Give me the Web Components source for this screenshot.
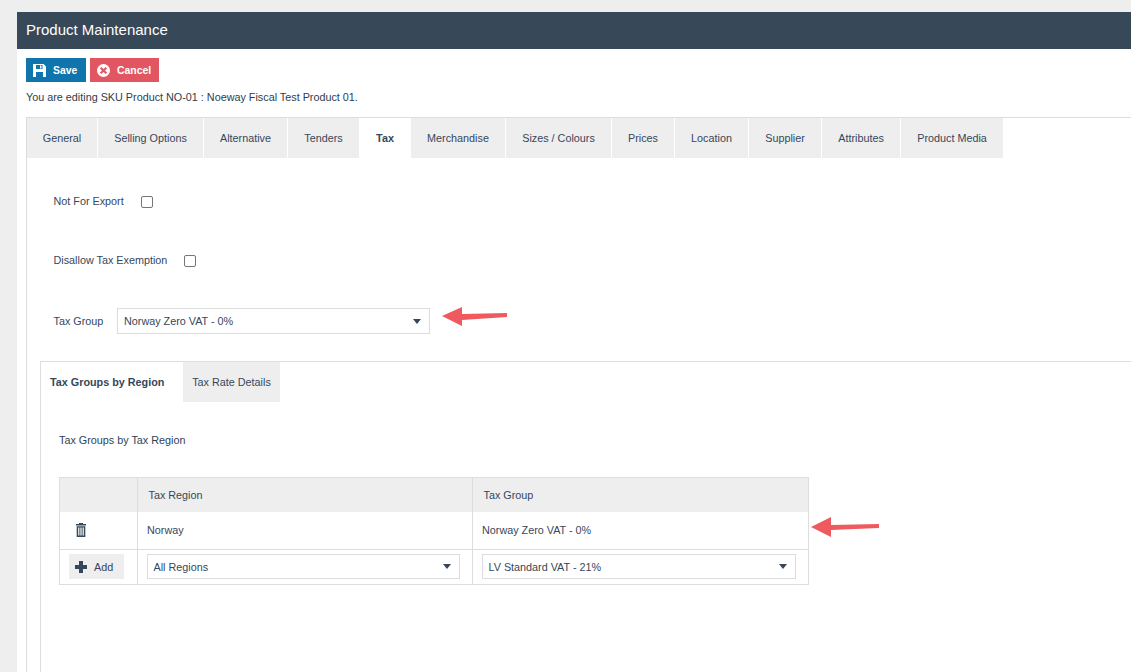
<!DOCTYPE html>
<html>
<head>
<meta charset="utf-8">
<title>Product Maintenance</title>
<style>
    html, body { margin: 0; height: 100%; overflow: hidden; }
    body { background: #eeeeee; font: 10.8px "Liberation Sans", Arial, sans-serif; color: #36475a; }
</style>
</head>
<body>
<pm-page heading="Product Maintenance">
    <div slot="actions">
        <pm-button kind="save">Save</pm-button>
        <pm-button kind="cancel">Cancel</pm-button>
    </div>
    <span slot="note">You are editing SKU Product NO-01 : Noeway Fiscal Test Product 01.</span>
    <tab-strip>
        <tab-label slot="tabs" style="width:70px">General</tab-label>
        <tab-label slot="tabs" style="width:105px">Selling Options</tab-label>
        <tab-label slot="tabs" style="width:83px">Alternative</tab-label>
        <tab-label slot="tabs" style="width:71px;margin-right:0">Tenders</tab-label>
        <tab-label slot="tabs" style="width:52px" selected>Tax</tab-label>
        <tab-label slot="tabs" style="width:94px">Merchandise</tab-label>
        <tab-label slot="tabs" style="width:105px">Sizes / Colours</tab-label>
        <tab-label slot="tabs" style="width:62px">Prices</tab-label>
        <tab-label slot="tabs" style="width:73px">Location</tab-label>
        <tab-label slot="tabs" style="width:72px">Supplier</tab-label>
        <tab-label slot="tabs" style="width:78px">Attributes</tab-label>
        <tab-label slot="tabs" style="width:102px">Product Media</tab-label>
        <tax-panel></tax-panel>
    </tab-strip>
</pm-page>

<script>
function mkTmplt(innerHtml) {
    var tmplt = document.createElement("template");
    tmplt.innerHTML = innerHtml;
    return tmplt;
}

class Base extends HTMLElement {
    constructor() {
        super();
        const shadow = this.attachShadow({ mode: "open" });
        shadow.append(this.constructor._tmplt.content.cloneNode(true));
    }
}

class PmPage extends Base {
    connectedCallback() {
        this.shadowRoot.querySelector("#title").textContent = this.getAttribute("heading");
    }
}
PmPage._tmplt = mkTmplt(`
    <style>
        :host { display: block; margin: 12px 0 0 17px; background: #fff; height: 660px; overflow: hidden; }
        #title { height: 37px; line-height: 36px; padding-left: 9px; background: #374859; color: #fff; font-size: 15px; }
        #actions { padding: 9px 0 0 9px; height: 24px; }
        #note { padding: 8px 0 0 9px; height: 27px; line-height: 14px; color: #2e3d4d; }
    </style>
    <div id="title"></div>
    <div id="actions"><slot name="actions"></slot></div>
    <div id="note"><slot name="note"></slot></div>
    <slot></slot>
`);

class PmButton extends Base {
}
PmButton._tmplt = mkTmplt(`
    <style>
        :host { display: inline-flex; align-items: center; height: 24px; color: #fff; font-weight: bold; font-size: 10.4px; vertical-align: top; margin-right: 1px; }
        :host([kind=save]) { background: #0f75ac; width: 60px; }
        :host([kind=cancel]) { background: #e15660; width: 69px; }
        svg { width: 13px; height: 13px; margin: 0 7px; flex: none; }
        :host([kind=save]) .c, :host([kind=cancel]) .s { display: none; }
    </style>
    <svg class="s" viewBox="0 0 13 13"><path fill="#fff" fill-rule="evenodd" d="M0 0h10.500L13 2.500V13H0zM3 1v4h6.500V1zM3 8v5h7V8zM7 1.500h1.500v3H7z"/></svg>
    <svg class="c" viewBox="0 0 13 13"><path fill="#fff" fill-rule="evenodd" d="M6.500 0a6.500 6.500 0 1 1 0 13a6.500 6.500 0 0 1 0-13zM4.400 2.900L2.900 4.400 5 6.500 2.900 8.600l1.500 1.500L6.500 8l2.100 2.100 1.500-1.500L8 6.500l2.100-2.100-1.500-1.500L6.500 5z"/></svg>
    <slot></slot>
`);

class TabLabel extends Base {
}
TabLabel._tmplt = mkTmplt(`
    <style>
        :host { display: flex; align-items: center; justify-content: center; height: 40px; background: #eeeeee; margin-right: 1px; box-sizing: border-box; color: #36475a; flex: none; }
        :host(:last-child) { margin-right: 0; }
        :host([selected]) { background: #fff; font-weight: bold; margin-right: 0; }
        :host([inner]) { margin-right: 0; }
    </style>
    <slot></slot>
`);

class TabStrip extends Base {
}
TabStrip._tmplt = mkTmplt(`
    <style>
        :host { display: block; margin-left: 9px; border-top: 1px solid #ddd; border-left: 1px solid #ddd; }
        #list { display: flex; }
    </style>
    <div id="list"><slot name="tabs"></slot></div>
    <slot></slot>
`);

class CheckRow extends Base {
    connectedCallback() {
        this.shadowRoot.querySelector("#lbl").textContent = this.getAttribute("label");
    }
}
CheckRow._tmplt = mkTmplt(`
    <style>
        :host { display: flex; align-items: center; height: 14px; color: #36475a; }
        #box { width: 10px; height: 10px; border: 1px solid #767676; border-radius: 2px; margin-left: 17px; margin-top: 1px; background: #fff; }
    </style>
    <span id="lbl"></span><span id="box"></span>
`);

class PmSelect extends Base {
}
PmSelect._tmplt = mkTmplt(`
    <style>
        :host { display: flex; align-items: center; justify-content: space-between; box-sizing: border-box; height: 26px; border: 1px solid #ddd; padding: 0 8px 0 6px; background: #fff; color: #36475a; }
        i { border-left: 4px solid transparent; border-right: 4px solid transparent; border-top: 5px solid #36475a; }
    </style>
    <span><slot></slot></span><i></i>
`);

class TaxTable extends Base {
}
TaxTable._tmplt = mkTmplt(`
    <style>
        :host { display: grid; grid-template-columns: 77px 335px 336px; grid-template-rows: 34px 38px 34px; width: 750px; box-sizing: border-box; border: 1px solid #ddd; color: #36475a; }
        div { display: flex; align-items: center; box-sizing: border-box; }
        .head { background: #eeeeee; padding-left: 10.500px; }
        .line { border-left: 1px solid #ddd; }
        .row { border-bottom: 1px solid #ddd; padding: 0 0 2px 9px; }
        .last { padding: 0 12px 1px 9px; }
        .tool { padding: 0 0 1px 9px; }
        .row.del { padding-left: 16px; }
        .add { display: inline-flex; align-items: center; width: 55px; height: 25px; background: #eeeeee; gap: 7px; padding-left: 6px; box-sizing: border-box; }
        pm-select { width: 100%; height: 25px; padding-left: 5.500px; }
    </style>
    <div class="head"></div>
    <div class="head line">Tax Region</div>
    <div class="head line">Tax Group</div>
    <div class="row del">
        <svg width="10" height="14" viewBox="0 0 10 14"><path fill="#36475a" fill-rule="evenodd" d="M3 0h4v1h3v1.500H0V1h3zM.7 3.200h8.600V14H.7zM2.200 4.500v8h1.200v-8zM4.400 4.500v8h1.200v-8zM6.600 4.500v8h1.200v-8z"/></svg>
    </div>
    <div class="row line">Norway</div>
    <div class="row line">Norway Zero VAT - 0%</div>
    <div class="tool">
        <span class="add">
            <svg width="12" height="12" viewBox="0 0 12 12"><path fill="#36475a" d="M4 0h4v4h4v4H8v4H4V8H0V4h4z"/></svg>
            Add
        </span>
    </div>
    <div class="last line"><pm-select>All Regions</pm-select></div>
    <div class="last line"><pm-select>LV Standard VAT - 21%</pm-select></div>
`);

class TaxPanel extends Base {
}
TaxPanel._tmplt = mkTmplt(`
    <style>
        :host { display: block; position: relative; }
        .form { padding: 36px 0 0 26.500px; }
        .row2 { margin-top: 45px; }
        .group { display: flex; align-items: center; margin-top: 41px; }
        .group span { width: 63.500px; }
        .group pm-select { width: 313px; }
        .inner { margin: 27px 0 0 13px; height: 320px; }
        .caption { padding: 31px 0 0 18px; height: 44px; color: #2f4256; line-height: 14px; }
        tax-table { margin-left: 18px; }
        .arrow { position: absolute; }
        .arrow path { fill: #ee5a5e; }
    </style>
    <div class="form">
        <check-row label="Not For Export"></check-row>
        <check-row class="row2" label="Disallow Tax Exemption"></check-row>
        <div class="group"><span>Tax Group</span><pm-select>Norway Zero VAT - 0%</pm-select></div>
    </div>
    <tab-strip class="inner">
        <tab-label slot="tabs" inner selected style="width:142px;justify-content:flex-start;padding-left:9px">Tax Groups by Region</tab-label>
        <tab-label slot="tabs" inner style="width:97px">Tax Rate Details</tab-label>
        <div class="caption">Tax Groups by Tax Region</div>
        <tax-table></tax-table>
    </tab-strip>
    <svg class="arrow" style="left:415px;top:148px" width="66" height="22" viewBox="0 0 66 22"><path d="M0 10L20 1v7L65 7v4L20 14v6z"/></svg>
    <svg class="arrow" style="left:784px;top:358px" width="70" height="22" viewBox="0 0 70 22"><path d="M0 11L20 1v8L68 8v4L20 14v7z"/></svg>
`);

customElements.define("pm-page", PmPage);
customElements.define("pm-button", PmButton);
customElements.define("tab-label", TabLabel);
customElements.define("tab-strip", TabStrip);
customElements.define("check-row", CheckRow);
customElements.define("pm-select", PmSelect);
customElements.define("tax-table", TaxTable);
customElements.define("tax-panel", TaxPanel);
</script>
</body>
</html>
